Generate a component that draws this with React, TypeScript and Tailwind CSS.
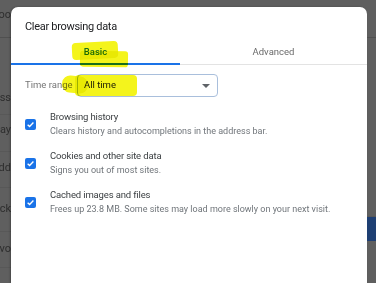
function Check() {
  return (
    <div className="w-[11px] h-[11px] rounded-[2px] bg-[#1a73e8] flex items-center justify-center shrink-0">
      <svg viewBox="0 0 12 12" className="w-[9px] h-[9px]">
        <path d="M2.2 6.2 L4.8 8.7 L9.9 3.3" fill="none" stroke="white" strokeWidth="1.8" />
      </svg>
    </div>
  )
}

const rows = [
  { title: 'Browsing history', sub: 'Clears history and autocompletions in the address bar.' },
  { title: 'Cookies and other site data', sub: 'Signs you out of most sites.' },
  { title: 'Cached images and files', sub: 'Frees up 23.8 MB. Some sites may load more slowly on your next visit.' },
]

export default function App() {
  return (
    <div className="w-[376px] h-[283px] bg-[#5f5f5f] flex overflow-hidden" style={{ fontFamily: 'Roboto, "Noto Sans", sans-serif' }}>
      {/* page behind the dialog */}
      <div className="w-[11px] shrink-0 flex flex-col text-[11px] text-[#2e2e2e] overflow-hidden whitespace-nowrap">
        <div className="h-[38px] flex items-center justify-end pb-[6px] border-b border-[#505050]">oo</div>
        <div className="h-[77px] flex items-end justify-end pb-[8px] border-b border-[#585858]">ass</div>
        <div className="h-[37px] flex items-center justify-end pb-[6px] border-b border-[#585858]">ay</div>
        <div className="h-[36px] flex items-center justify-end pb-[2px] border-b border-[#585858]">odd</div>
        <div className="h-[44px] flex items-center justify-end border-b border-[#585858]">ck</div>
        <div className="h-[36px] flex items-center justify-end border-b border-[#585858]">vo</div>
      </div>

      <div className="flex-1 mt-[7px] bg-white rounded-t-[7px] flex flex-col shadow-[-1px_0_2px_rgba(0,0,0,0.25)]">
        <div className="pl-[14px] pt-[12px] text-[11px] tracking-[-0.3px] text-[#202124] leading-[16px]">Clear browsing data</div>

        <div className="flex text-[9.5px] relative">
          <div className="w-[169px] h-[30px] border-b-2 border-[#1a73e8] flex justify-center pt-[10px]">
            <span className="text-[#1a73e8] font-medium leading-[14px]">Basic</span>
          </div>
          <div className="flex-1 h-[30px] border-b border-[#e3e3e3] flex justify-center pt-[10px]">
            <span className="text-[#6a6a6a] leading-[14px]">Advanced</span>
          </div>
          <div className="absolute left-[61px] top-[7px] w-[46px] h-[17px] bg-[#f4f41c] mix-blend-multiply rounded-[4px] -rotate-3" />
          <div className="absolute left-[69px] top-[16px] w-[48px] h-[16px] bg-[#f4f41c] mix-blend-multiply rounded-[3px] rotate-1" />
        </div>

        <div className="flex items-center pl-[14px] mt-[9px] text-[9.5px] relative">
          <span className="text-[#757575] w-[52px]">Time range</span>
          <div className="w-[141px] h-[23px] border border-[#a9bfdc] rounded-[4px] flex items-center justify-between pr-[7px]">
            <span className="pl-[6px] text-[#202124]">All time</span>
            <svg viewBox="0 0 10 5" className="w-[8px] h-[4px]"><path d="M0 0 L10 0 L5 5 Z" fill="#5f6368" /></svg>
          </div>
          <div className="absolute left-[51px] top-[2px] w-[26px] h-[17px] bg-[#f4f41c] mix-blend-multiply rounded-[8px] rotate-6" />
          <div className="absolute left-[64px] top-[1px] w-[62px] h-[21px] bg-[#f4f41c] mix-blend-multiply rounded-[4px]" />
        </div>

        <div className="flex flex-col gap-[10px] mt-[13px] pl-[14px]">
          {rows.map((r) => (
            <div key={r.title} className="flex items-center gap-[14px]">
              <Check />
              <div className="flex flex-col">
                <span className="text-[9.5px] tracking-[-0.15px] text-[#3c4043] leading-[14px]">{r.title}</span>
                <span className="text-[9px] text-[#70757a] leading-[15px]">{r.sub}</span>
              </div>
            </div>
          ))}
        </div>
      </div>

      <div className="w-[9px] shrink-0 flex flex-col">
        <div className="h-[38px] border-b border-[#505050]" />
        <div className="h-[179px] border-b border-[#585858]" />
        <div className="h-[24px] bg-[#1e3f73]" />
      </div>
    </div>
  )
}
